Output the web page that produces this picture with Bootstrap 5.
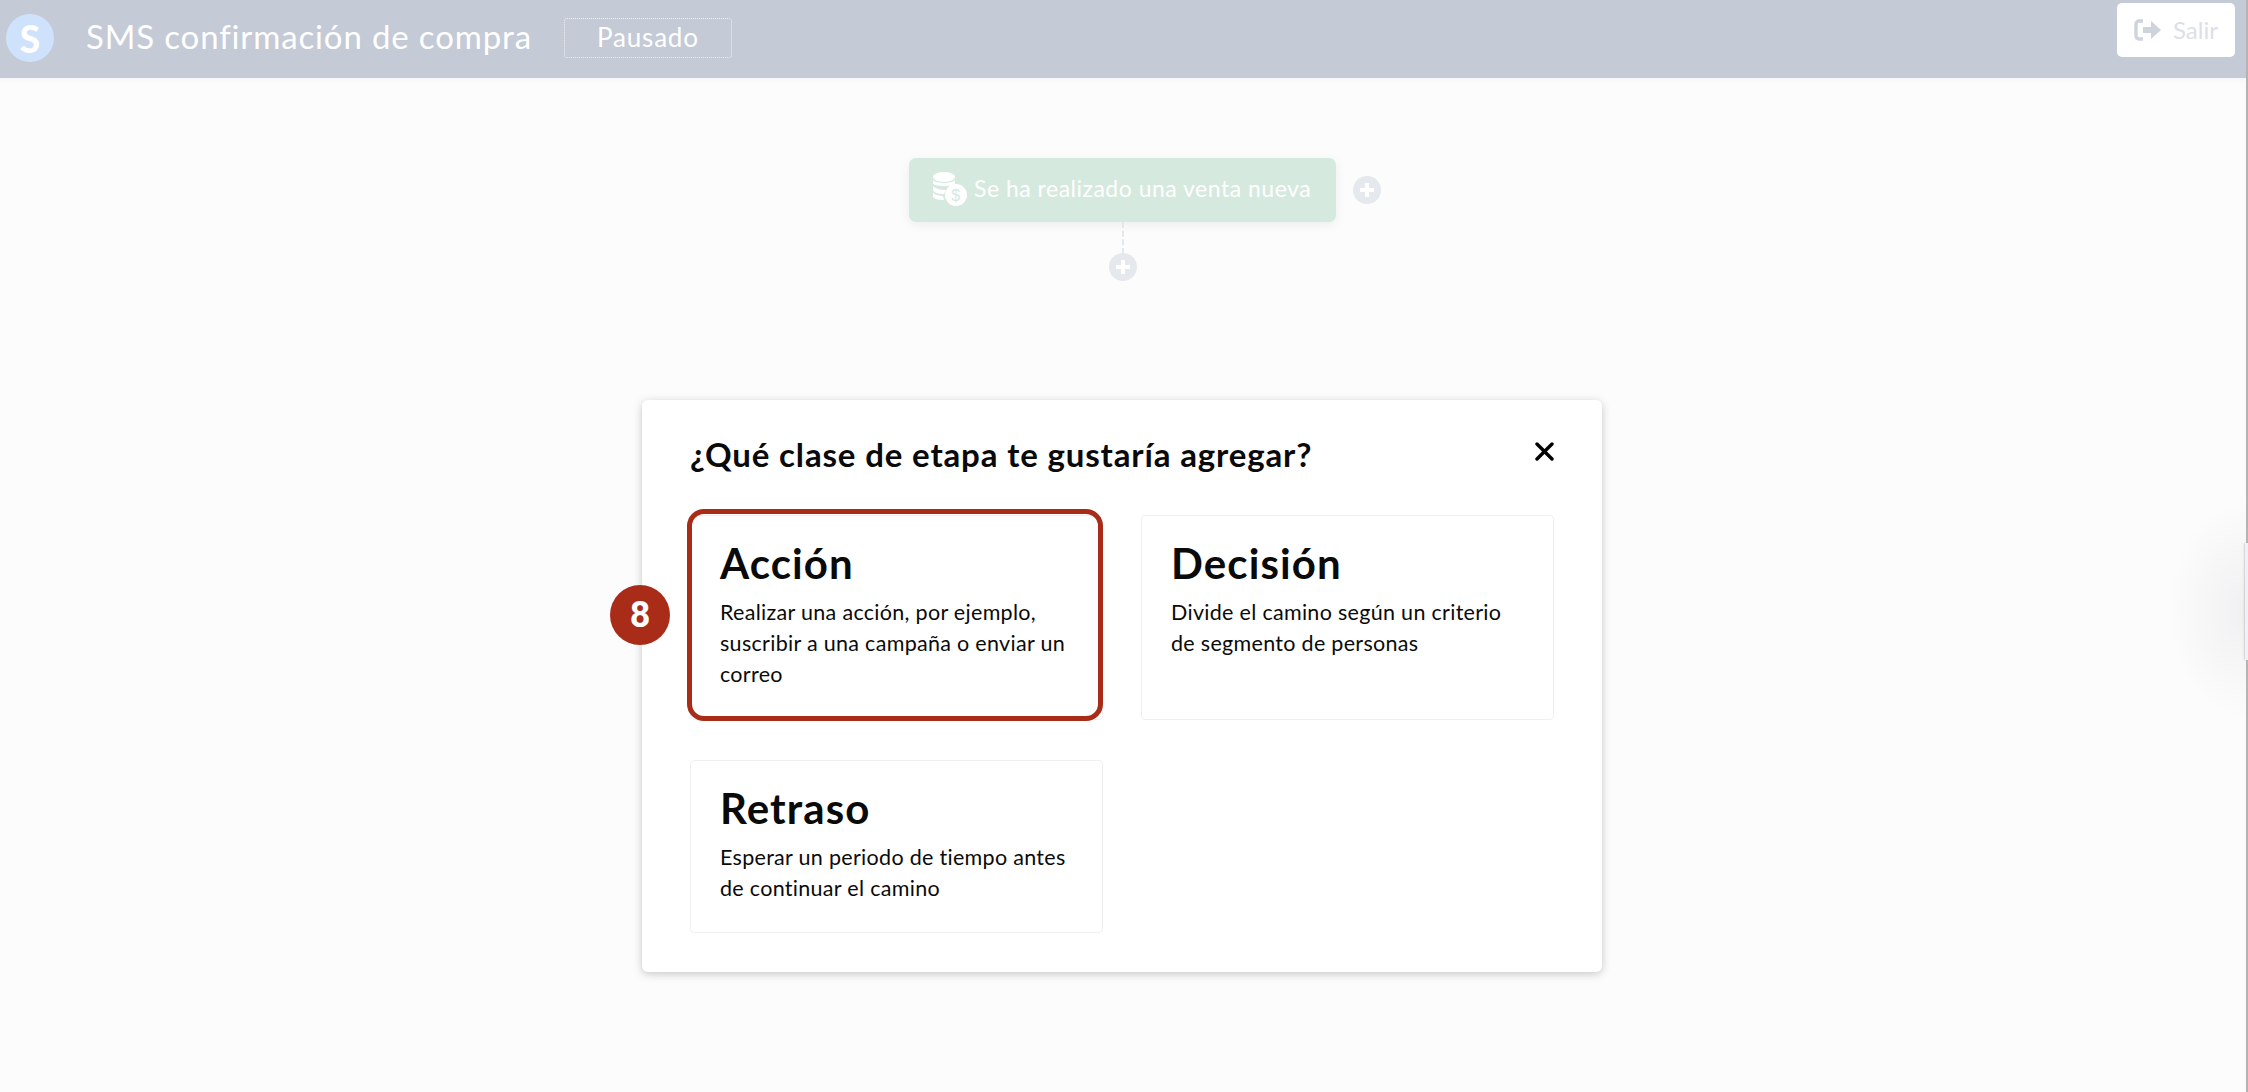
<!DOCTYPE html>
<html lang="es">
<head>
  <meta charset="UTF-8">
  <title>SMS confirmación de compra</title>
  <link href="https://cdn.jsdelivr.net/npm/bootstrap@5.3.0/dist/css/bootstrap.min.css" rel="stylesheet">
  <style>
    html, body { height: 100%; }
    body { background: #fcfcfc; font-family: "Lato", "Liberation Sans", sans-serif; overflow: hidden; position: relative; }
    .top-bar { height: 78px; background: #c4cad6; padding: 0 13px 0 6px; box-shadow: 0 3px 4px #f5f6fa; }
    .logo-dot { width: 48px; height: 48px; margin-top: -2px; background: #cfe2fb; border-radius: 50%; color: #fff; font-size: 37px; font-weight: 900; line-height: 1; }
    .flow-title { color: #fff; font-size: 33px; margin: -5px 0 0 32px; letter-spacing: .85px; }
    .state-box { width: 168px; height: 40px; margin: -2px 0 0 32px; padding-bottom: 2px; border: 1px dotted #eef0f4; border-radius: 3px; color: #fff; font-size: 26px; letter-spacing: .8px; }
    .exit-btn { width: 118px; height: 54px; margin-top: -18px; background: #fff; border-radius: 5px; color: #dde0e8; font-size: 24px; gap: 11px; }
    .flow-area { position: relative; height: 340px; }
    .trigger-node { position: absolute; left: 909px; top: 80px; width: 427px; height: 64px; padding-bottom: 3px; background: #d5e9df; border-radius: 7px; box-shadow: 0 3px 10px rgba(120,130,150,.12); color: #fff; font-size: 23px; padding-left: 24px; gap: 7px; letter-spacing: .5px; }
    .add-dot { position: absolute; width: 28px; height: 28px; border-radius: 50%; background: #e5e8ec; }
    .add-right { left: 1353px; top: 98px; }
    .add-below { left: 1109px; top: 175px; }
    .flow-line { position: absolute; left: 1122px; top: 144px; height: 32px; border-left: 2px dashed #e4e7ec; }
    .step-modal { width: 960px; height: 572px; margin: -18px 0 0 642px; background: #fff; border-radius: 6px; box-shadow: 0 2px 8px rgba(60,60,70,.28); padding: 0 48px; position: relative; }
    .modal-head { height: 115px; padding-top: 35px; }
    .modal-head h2 { font-family: "Lato", sans-serif; font-size: 33px; font-weight: 700; color: #0a0a0a; margin: 0; letter-spacing: .85px; }
    .close-x { position: absolute; right: 48px; top: 42px; line-height: 0; }
    .step-grid { display: grid; grid-template-columns: 413px 413px; column-gap: 38px; }
    .step-card { border: 1px solid #f0f0f2; border-radius: 4px; padding: 20px 29px 0; color: #0a0a0a; position: relative; }
    .step-card h3 { font-size: 42px; font-weight: 700; margin: 0 0 6px; line-height: 55px; letter-spacing: 1.1px; }
    .step-card p { font-size: 21.5px; line-height: 31px; margin: 0; letter-spacing: .3px; }
    .tall-card { height: 205px; }
    .low-card { height: 173px; margin-top: 40px; }
    .step-mark { position: absolute; left: -4px; top: -7px; right: -1px; bottom: -2px; border: 5px solid #a82c18; border-radius: 17px; }
    .step-badge { position: absolute; left: -81px; top: 69px; width: 60px; height: 60px; border-radius: 50%; background: #a82c18; color: #fff; font-family: "Roboto", sans-serif; font-size: 36px; font-weight: 700; }
    .edge-glow { position: absolute; right: -80px; top: 500px; width: 160px; height: 220px; border-radius: 50%; background: radial-gradient(closest-side, #f0f0f2, #fcfcfc); }
    .edge-line { position: absolute; left: 2246px; top: 0; bottom: 0; width: 2px; background: #b4b4b6; }
    .edge-tab { position: absolute; left: 2245px; top: 543px; width: 3px; height: 117px; background: #f0f0f7; box-shadow: -1px 0 2px rgba(0,0,0,.15); }
  </style>
</head>
<body>
  <header class="top-bar d-flex align-items-center">
    <div class="logo-dot d-flex align-items-center justify-content-center">S</div>
    <div class="flow-title">SMS confirmación de compra</div>
    <div class="state-box d-flex align-items-center justify-content-center">Pausado</div>
    <button type="button" class="exit-btn btn d-flex align-items-center justify-content-center ms-auto p-0 border-0">
      <svg width="28" height="24" viewBox="0 0 28 24"><path d="M9 3H5a3 3 0 0 0-3 3v12a3 3 0 0 0 3 3h4" fill="none" stroke="#ced3de" stroke-width="3.4"/><path d="M9 9h8V3l10 9-10 9v-6H9z" fill="#ced3de"/></svg>
      <span>Salir</span>
    </button>
  </header>

  <div class="flow-area">
    <div class="trigger-node d-flex align-items-center">
      <svg width="34" height="34" viewBox="0 0 34 34" fill="#fff"><ellipse cx="11" cy="5" rx="11" ry="5"/><path d="M0 8c3 4 19 4 22 0v3.5c-3 3.5-19 3.500-22 0zM0 14c3 3 8 4 13 4l-2 4c-5 0-10-1-11-4zM0 21c3 2 6 3 10 3l1 4c-5 0-10-1-11-3z"/><circle cx="23" cy="23" r="11"/><text x="23" y="29" font-size="16" font-family="Liberation Sans" text-anchor="middle" fill="#d5e9df">$</text></svg>
      <span>Se ha realizado una venta nueva</span>
    </div>
    <div class="add-dot add-right d-flex align-items-center justify-content-center"><svg width="14" height="14" viewBox="0 0 14 14"><path d="M5 0h4v5h5v4H9v5H5V9H0V5h5z" fill="#fff"/></svg></div>
    <div class="flow-line"></div>
    <div class="add-dot add-below d-flex align-items-center justify-content-center"><svg width="14" height="14" viewBox="0 0 14 14"><path d="M5 0h4v5h5v4H9v5H5V9H0V5h5z" fill="#fff"/></svg></div>
  </div>

  <main class="step-modal">
    <div class="modal-head">
      <h2>¿Qué clase de etapa te gustaría agregar?</h2>
    </div>
    <div class="close-x"><svg width="19" height="19" viewBox="0 0 19 19"><path d="M2 2l15 15M17 2L2 17" stroke="#000" stroke-width="3.4" stroke-linecap="round"/></svg></div>
    <div class="step-grid">
      <div class="step-card tall-card">
        <h3>Acción</h3>
        <p>Realizar una acción, por ejemplo, suscribir a una campaña o enviar un correo</p>
        <div class="step-mark"></div>
        <div class="step-badge d-flex align-items-center justify-content-center">8</div>
      </div>
      <div class="step-card tall-card">
        <h3>Decisión</h3>
        <p>Divide el camino según un criterio de segmento de personas</p>
      </div>
      <div class="step-card low-card">
        <h3>Retraso</h3>
        <p>Esperar un periodo de tiempo antes de continuar el camino</p>
      </div>
    </div>
  </main>
  <div class="edge-glow"></div>
  <div class="edge-line"></div>
  <div class="edge-tab"></div>

  <script src="https://cdn.jsdelivr.net/npm/bootstrap@5.3.0/dist/js/bootstrap.bundle.min.js"></script>
</body>
</html>
